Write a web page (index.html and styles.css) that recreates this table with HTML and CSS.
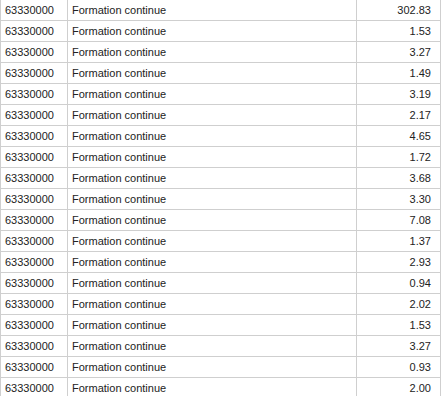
FILE: index.html
```html
<!DOCTYPE html>
<html>
<head>
<meta charset="utf-8">
<link rel="stylesheet" href="styles.css">
</head>
<body>
<table class="grid">
<colgroup><col class="c-code"><col class="c-label"><col class="c-amount"></colgroup>
<tbody>
<tr><td>63330000</td><td>Formation continue</td><td class="num">302.83</td></tr>
<tr><td>63330000</td><td>Formation continue</td><td class="num">1.53</td></tr>
<tr><td>63330000</td><td>Formation continue</td><td class="num">3.27</td></tr>
<tr><td>63330000</td><td>Formation continue</td><td class="num">1.49</td></tr>
<tr><td>63330000</td><td>Formation continue</td><td class="num">3.19</td></tr>
<tr><td>63330000</td><td>Formation continue</td><td class="num">2.17</td></tr>
<tr><td>63330000</td><td>Formation continue</td><td class="num">4.65</td></tr>
<tr><td>63330000</td><td>Formation continue</td><td class="num">1.72</td></tr>
<tr><td>63330000</td><td>Formation continue</td><td class="num">3.68</td></tr>
<tr><td>63330000</td><td>Formation continue</td><td class="num">3.30</td></tr>
<tr><td>63330000</td><td>Formation continue</td><td class="num">7.08</td></tr>
<tr><td>63330000</td><td>Formation continue</td><td class="num">1.37</td></tr>
<tr><td>63330000</td><td>Formation continue</td><td class="num">2.93</td></tr>
<tr><td>63330000</td><td>Formation continue</td><td class="num">0.94</td></tr>
<tr><td>63330000</td><td>Formation continue</td><td class="num">2.02</td></tr>
<tr><td>63330000</td><td>Formation continue</td><td class="num">1.53</td></tr>
<tr><td>63330000</td><td>Formation continue</td><td class="num">3.27</td></tr>
<tr><td>63330000</td><td>Formation continue</td><td class="num">0.93</td></tr>
<tr><td>63330000</td><td>Formation continue</td><td class="num">2.00</td></tr>
</tbody>
</table>
</body>
</html>
```

FILE: styles.css
```css
html, body {
  margin: 0;
  padding: 0;
  background: #fff;
}
body {
  overflow: hidden;
}
.grid {
  border-collapse: collapse;
  table-layout: fixed;
  width: 440px;
  margin-top: -1px;
  font-family: "Liberation Sans", Arial, sans-serif;
  font-size: 11px;
  color: #222;
}
.c-code { width: 67px; }
.c-label { width: 289px; }
.c-amount { width: 84px; }
.grid td {
  border: 1px solid #cfcfcf;
  height: 20px;
  padding: 0 4px;
  box-sizing: border-box;
  white-space: nowrap;
  line-height: 20px;
}
.grid td.num {
  text-align: right;
  padding-right: 9px;
}
```
